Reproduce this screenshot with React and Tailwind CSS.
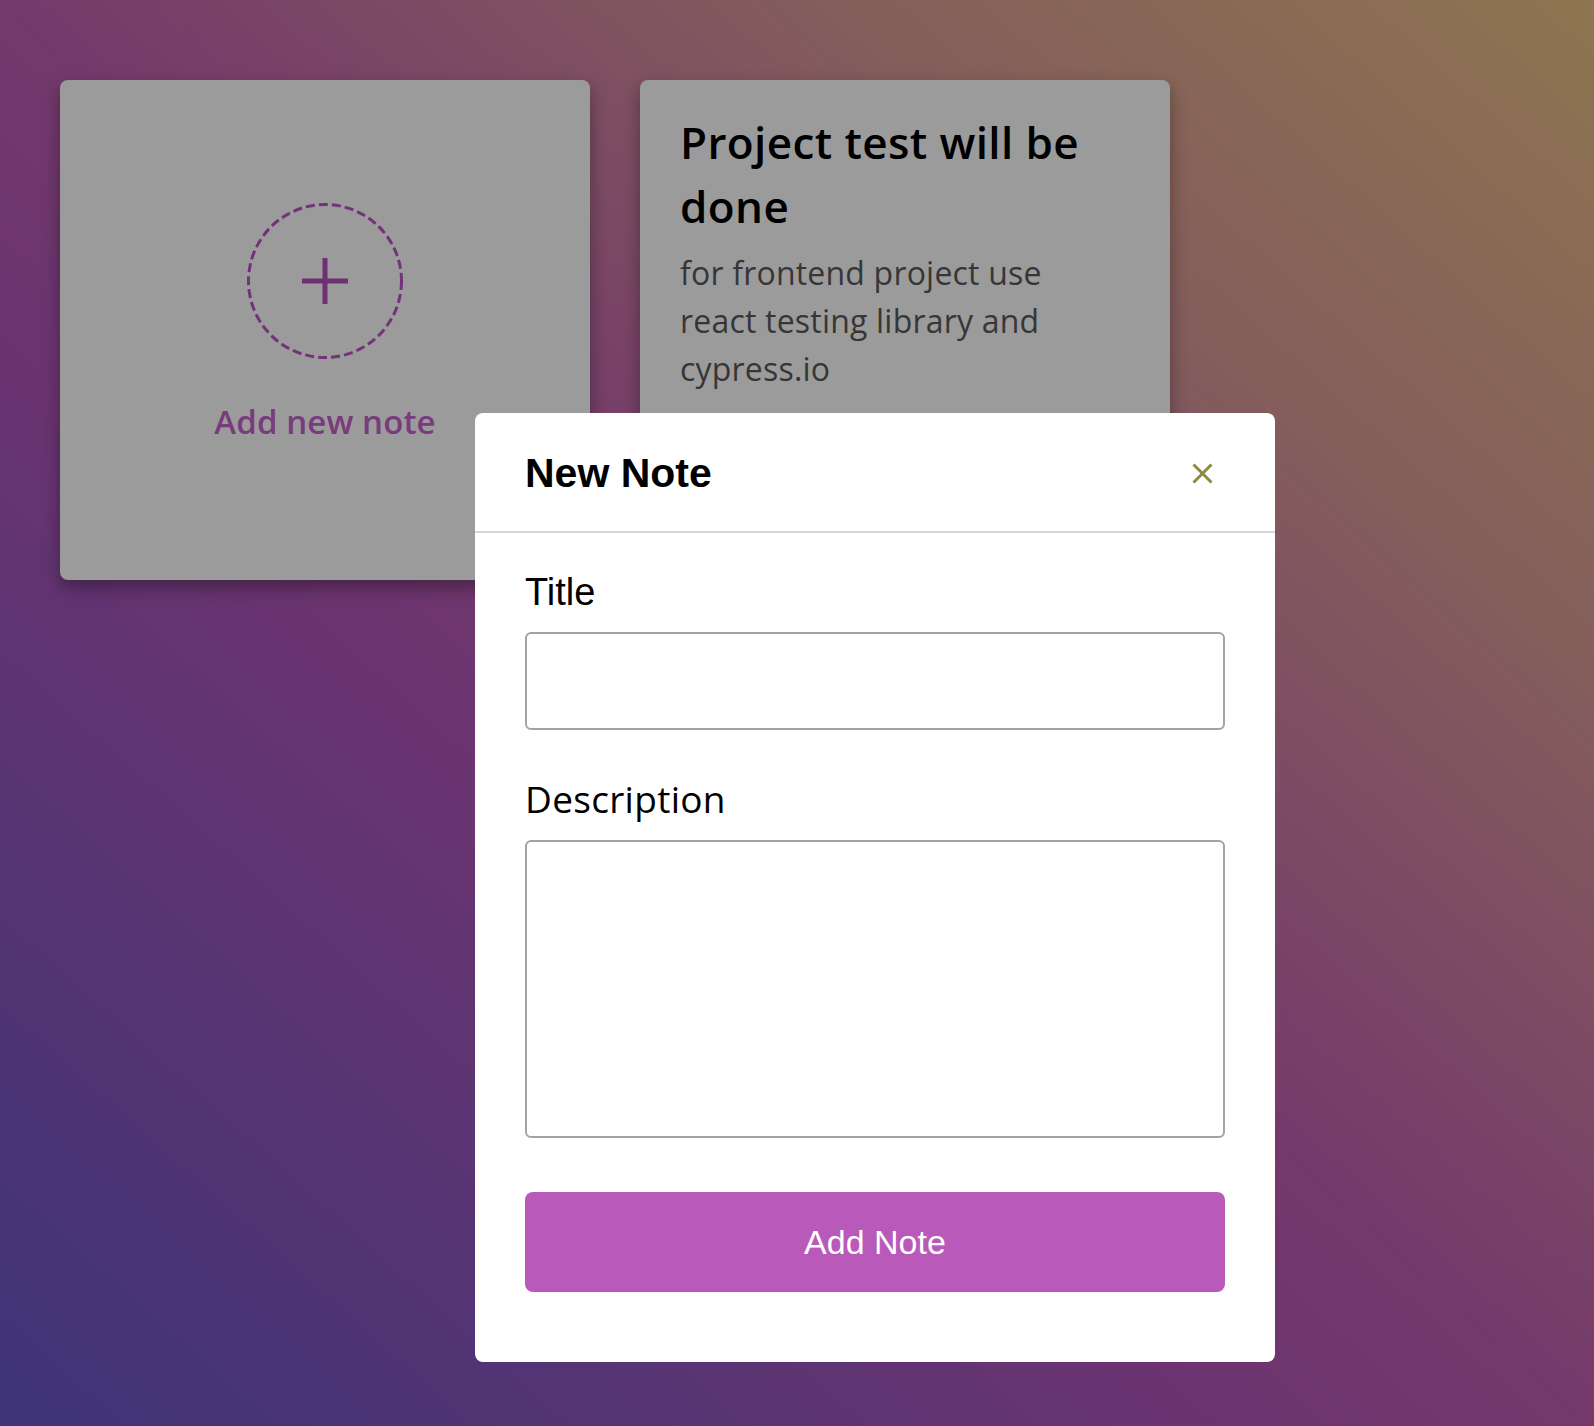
import React from "react";

export default function App() {
  return (
    <div className="relative min-h-screen w-full overflow-hidden bg-[linear-gradient(to_top_right,#3d3477_0%,#6b3471_38%,#74396c_50%,#845c5c_75%,#8e7550_100%)] font-['Open_Sans',sans-serif]">
      <div className="flex gap-[50px] pl-[60px] pt-[80px]">
        {/* Add new note card */}
        <div className="flex h-[500px] w-[530px] flex-col items-center justify-center rounded-[8px] bg-[#9b9b9b] pb-[14px] shadow-[0_8px_18px_rgba(0,0,0,0.35)]">
          <svg width="160" height="160" viewBox="0 0 160 160">
            <circle
              cx="80"
              cy="80"
              r="76.5"
              fill="none"
              stroke="#74327a"
              strokeWidth="3"
              strokeDasharray="9 4.1"
            />
            <line x1="80" y1="57" x2="80" y2="103" stroke="#6f2f74" strokeWidth="5" />
            <line x1="57" y1="80" x2="103" y2="80" stroke="#6f2f74" strokeWidth="5" />
          </svg>
          <div className="mt-[37px] text-[33px] leading-[48px] font-semibold tracking-[0.1px] text-[#7a3a7e]">
            Add new note
          </div>
        </div>

        {/* Note card */}
        <div className="h-[500px] w-[530px] rounded-[8px] bg-[#9b9b9b] pl-[40px] pr-[60px] pt-[30px] shadow-[0_8px_18px_rgba(0,0,0,0.35)]">
          <h2 className="text-[44px] leading-[64px] font-semibold tracking-[0.4px] text-black">
            Project test will be done
          </h2>
          <p className="mt-[11px] w-[415px] text-[32px] leading-[48px] tracking-[0.2px] text-[#363636]">
            for frontend project use react testing library and cypress.io
          </p>
        </div>
      </div>

      {/* Modal */}
      <div className="absolute left-[475px] top-[413px] w-[800px] rounded-[8px] bg-white">
        <div className="flex h-[120px] items-center justify-between border-b-2 border-[#d6d6d6] pl-[50px] pr-[62px]">
          <h3 className="mt-[3px] font-['Liberation_Sans',Arial,sans-serif] text-[41px] font-bold text-black">
            New Note
          </h3>
          <svg width="21" height="21" viewBox="0 0 21 21" className="mt-[2px]">
            <line x1="1.5" y1="1.5" x2="19.5" y2="19.5" stroke="#8b8a3f" strokeWidth="3" />
            <line x1="19.5" y1="1.5" x2="1.5" y2="19.5" stroke="#8b8a3f" strokeWidth="3" />
          </svg>
        </div>
        <div className="flex flex-col px-[50px] pt-[38px] pb-[70px]">
          <label className="font-['Liberation_Sans',Arial,sans-serif] text-[38px] leading-[43px] text-black">
            Title
          </label>
          <input
            type="text"
            className="mt-[18px] h-[98px] w-full rounded-[6px] border-2 border-[#a3a3a3] bg-white px-3 outline-none"
          />
          <label className="mt-[45px] text-[37px] leading-[48px] tracking-[0.3px] text-black">
            Description
          </label>
          <textarea className="mt-[17px] h-[298px] w-full resize-none rounded-[6px] border-2 border-[#a3a3a3] bg-white p-3 outline-none" />
          <button className="mt-[54px] h-[100px] w-full rounded-[8px] bg-[#b959b9] font-['Liberation_Sans',Arial,sans-serif] text-[34px] text-white">
            Add Note
          </button>
        </div>
      </div>
    </div>
  );
}
